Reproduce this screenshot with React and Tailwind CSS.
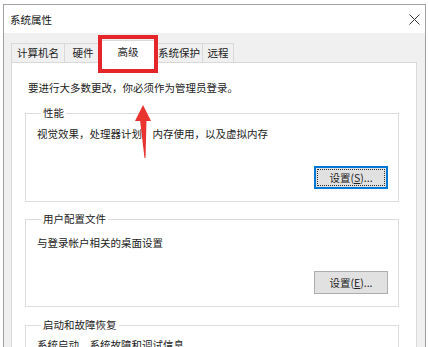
import React from 'react';

const font = { fontFamily: '"Microsoft YaHei", "Noto Sans CJK SC", "Noto Sans", sans-serif' };

function Tab({ label, width, selected, last }) {
  if (selected) {
    return (
      <div
        className={`${width} h-[23px] -mb-px relative z-10 bg-white border-l border-t border-r border-[#d9d9d9] flex items-start justify-center pt-[3px]`}
      >
        {label}
      </div>
    );
  }
  return (
    <div
      className={`${width} h-[19px] bg-[#f0f0f0] border-l border-t ${last ? 'border-r' : ''} border-[#d9d9d9] flex items-center justify-center`}
    >
      {label}
    </div>
  );
}

function SettingsButton({ children, focused }) {
  return (
    <div className="flex justify-end">
      {focused ? (
        <button className="w-[74px] h-[23px] bg-[#e1e1e1] border-2 border-[#0078d7] p-[1px]">
          <span className="w-full h-full flex items-center justify-center border border-dotted border-[#333] text-[#222]">
            {children}
          </span>
        </button>
      ) : (
        <button className="w-[74px] h-[23px] bg-[#e1e1e1] border border-[#adadad] flex items-center justify-center text-[#222]">
          {children}
        </button>
      )}
    </div>
  );
}

function Group({ title, children, className }) {
  return (
    <fieldset className={`ml-[13px] w-[374px] border border-[#dcdcdc] px-[10px] ${className || ''}`}>
      <legend className="ml-[5px] px-[2px] leading-[16px] text-[#222]">{title}</legend>
      {children}
    </fieldset>
  );
}

export default function App() {
  return (
    <div className="w-[428px] h-[347px] overflow-hidden bg-white relative text-[10.5px]" style={font}>
      <div className="ml-[3px] mt-[4px] w-[423px] h-[343px] border-l border-t border-r border-[#a0a0a0] bg-[#f0f0f0]">
        {/* title bar */}
        <div className="h-[28px] bg-white flex items-center justify-between pl-[6px] pr-[5px] pt-[1px]">
          <span className="text-[#111]">系统属性</span>
          <svg width="11" height="11" viewBox="0 0 11 11">
            <path d="M0.5 0.5 L10.5 10.5 M10.5 0.5 L0.5 10.5" stroke="#333" strokeWidth="1" />
          </svg>
        </div>

        {/* tabs */}
        <div className="flex items-end ml-[7px] mt-[7px] text-[#222]">
          <Tab label="计算机名" width="w-[53px]" />
          <Tab label="硬件" width="w-[37px]" />
          <Tab label="高级" width="w-[54px]" selected />
          <Tab label="系统保护" width="w-[47px]" />
          <Tab label="远程" width="w-[32px]" last />
        </div>

        {/* panel */}
        <div className="ml-[7px] w-[406px] h-[290px] bg-white border border-[#d9d9d9] pt-[17px]">
          <p className="pl-[16px] leading-[16px] text-[#222]">要进行大多数更改，你必须作为管理员登录。</p>

          <Group title="性能" className="mt-[9px] pb-[12px]">
            <p className="pl-[1px] mt-[5px] leading-[16px] text-[#222]">视觉效果，处理器计划，内存使用，以及虚拟内存</p>
            <div className="mt-[24px]">
              <SettingsButton focused>
                设置(<span className="underline">S</span>)...
              </SettingsButton>
            </div>
          </Group>

          <Group title="用户配置文件" className="mt-[9px] pb-[12px]">
            <p className="pl-[1px] mt-[8px] leading-[16px] text-[#222]">与登录帐户相关的桌面设置</p>
            <div className="mt-[20px]">
              <SettingsButton>
                设置(<span className="underline">E</span>)...
              </SettingsButton>
            </div>
          </Group>

          <Group title="启动和故障恢复" className="mt-[10px] pb-[12px]">
            <p className="pl-[1px] mt-[4px] leading-[16px] text-[#222]">系统启动、系统故障和调试信息</p>
          </Group>
        </div>
      </div>

      {/* red highlight box around the tab */}
      <div className="absolute left-[98px] top-[35px] w-[60px] h-[38px] border-[4px] border-[#e4262b] z-20" />

      {/* red arrow */}
      <svg className="absolute left-[130px] top-[100px] z-20" width="30" height="64" viewBox="130 100 30 64">
        <polygon points="143,105 135,121 151,121" fill="#e8332e" />
        <polygon points="140,120 146.5,120 145.5,158 144.5,158" fill="#e8332e" />
      </svg>
    </div>
  );
}
